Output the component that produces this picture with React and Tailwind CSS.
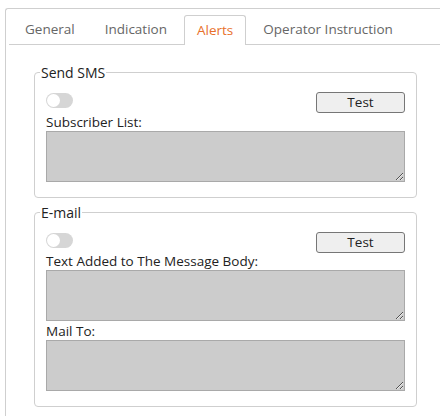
const tabs = ["General", "Indication", "Alerts", "Operator Instruction"];

function Toggle() {
    return (
        <div className="w-[27px] h-[15px] rounded-full bg-[#d6d6d6] flex items-center px-[1px]">
            <div className="w-[13px] h-[13px] rounded-full bg-white" />
        </div>
    );
}

function TestRow() {
    return (
        <div className="flex items-start justify-between">
            <div className="pt-[1px]">
                <Toggle />
            </div>
            <button className="w-[89px] h-[21px] border border-[#767676] rounded-[3px] bg-[#efefef] text-[13.5px] text-[#222] leading-none">
                Test
            </button>
        </div>
    );
}

function Field({ label, className = "" }) {
    return (
        <div className={className}>
            <div className="text-[13.5px] leading-[17px] text-[#222]">{label}</div>
            <textarea className="block w-full h-[51px] border border-[#a9a9a9] bg-[#cccccc] resize-y outline-none" />
        </div>
    );
}

function Group({ title, children, className = "" }) {
    return (
        <fieldset className={`border border-[#cfcfcf] rounded-[4px] px-[11px] pb-[15px] ${className}`}>
            <legend className="ml-[-6px] px-[1px] text-[14px] leading-[17px] text-[#222]">{title}</legend>
            <div className="mt-[11px]">{children}</div>
        </fieldset>
    );
}

export default function App() {
    return (
        <div className="w-[440px] h-[416px] bg-white overflow-hidden" style={{ fontFamily: "'Open Sans', 'Liberation Sans', sans-serif" }}>
            <div className="mt-[8px] ml-[5px] h-[420px] border-l border-t border-[#cfcfcf] rounded-tl-[3px] pl-[3px] pt-[6px]">
                {/* Tabs */}
                <div className="flex border-b border-[#cfcfcf] pl-[3px] h-[30px]">
                    {tabs.map((t) => (
                        <div
                            key={t}
                            className={
                                t === "Alerts"
                                    ? "mr-[4px] px-[12px] mb-[-1px] border border-b-0 border-[#cfcfcf] rounded-t-[3px] bg-white text-[#e8702a] text-[13.5px] flex items-center"
                                    : "mr-[4px] px-[13px] text-[#666] text-[13.5px] flex items-center"
                            }
                        >
                            {t}
                        </div>
                    ))}
                </div>

                {/* Content */}
                <div className="pl-[25px] pt-[19px] w-[408px]">
                    <Group title="Send SMS">
                        <TestRow />
                        <Field label="Subscriber List:" className="mt-[1px]" />
                    </Group>
                    <Group title="E-mail" className="mt-[6px]">
                        <TestRow />
                        <Field label="Text Added to The Message Body:" />
                        <Field label="Mail To:" className="mt-[2px]" />
                    </Group>
                </div>
            </div>
        </div>
    );
}
